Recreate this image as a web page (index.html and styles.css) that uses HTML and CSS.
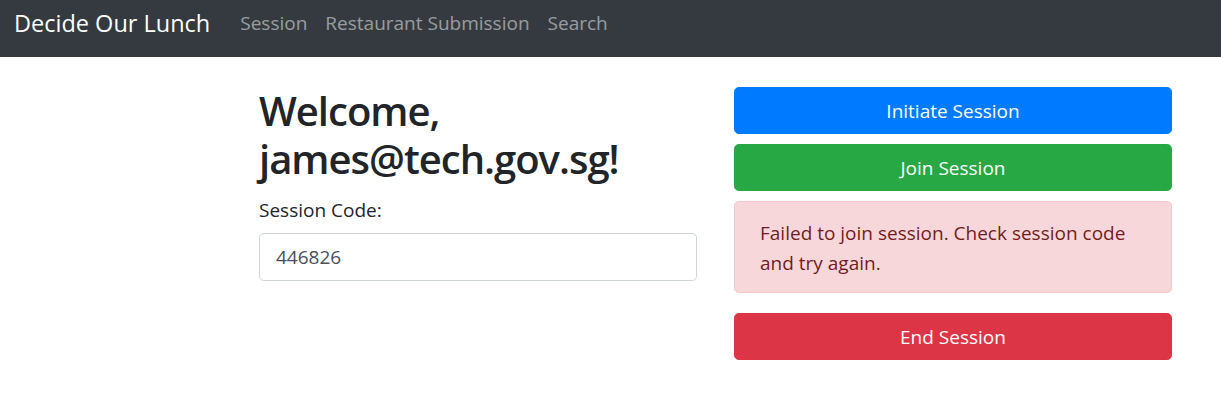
FILE: index.html
```html
<!DOCTYPE html>
<html lang="en">
<head>
<meta charset="utf-8">
<title>Decide Our Lunch</title>
<link rel="stylesheet" href="styles.css">
</head>
<body>
<nav class="navbar">
  <a class="brand" href="#">Decide Our Lunch</a>
  <ul class="nav">
    <li><a class="nav-link" href="#">Session</a></li>
    <li><a class="nav-link" href="#">Restaurant Submission</a></li>
    <li><a class="nav-link" href="#">Search</a></li>
  </ul>
</nav>
<main class="main">
  <section class="col">
    <h1 class="title">Welcome, james@tech.gov.sg!</h1>
    <label class="label" for="code">Session Code:</label>
    <input class="input" id="code" type="text" value="446826">
  </section>
  <section class="col">
    <button class="btn btn-primary">Initiate Session</button>
    <button class="btn btn-success">Join Session</button>
    <div class="alert">Failed to join session. Check session code and try again.</div>
    <button class="btn btn-danger">End Session</button>
  </section>
</main>
</body>
</html>
```
FILE: styles.css
```css
* { box-sizing: border-box; }
body {
  margin: 0;
  font-family: "Open Sans", "Noto Sans", sans-serif;
  color: #212529;
  background: #fff;
  font-size: 19px;
  line-height: 1.5;
}
.navbar {
  display: flex;
  align-items: center;
  height: 57px;
  padding: 0 14px 11px 14px;
  background: #343a40;
}
.brand {
  font-size: 23.5px;
  line-height: 34px;
  color: #fff;
  text-decoration: none;
  margin-right: 21px;
  white-space: nowrap;
}
.nav {
  display: flex;
  list-style: none;
  margin: 0;
  padding: 0;
}
.nav-link {
  display: block;
  padding: 0 9px;
  line-height: 34px;
  color: rgba(255,255,255,.5);
  text-decoration: none;
  font-size: 19px;
}
.main {
  display: flex;
  gap: 37px;
  padding: 30px 0 0 259px;
}
.col {
  width: 438px;
  display: flex;
  flex-direction: column;
}
.title {
  margin: 0 0 13px;
  font-size: 40px;
  font-weight: 600;
  line-height: 48px;
  letter-spacing: -1px;
}
.label {
  display: block;
  font-size: 19px;
  line-height: 28px;
  margin-bottom: 9px;
}
.input {
  height: 48px;
  padding: 8px 16px;
  font-size: 19px;
  font-family: inherit;
  color: #495057;
  border: 1px solid #ced4da;
  border-radius: 4.8px;
}
.btn {
  display: block;
  width: 100%;
  height: 47px;
  margin-bottom: 10px;
  padding: 2px 16px 0;
  font-family: inherit;
  font-size: 19px;
  line-height: 43px;
  color: #fff;
  border: 1px solid transparent;
  border-radius: 4.8px;
}
.btn-primary { background: #007bff; border-color: #007bff; }
.btn-success { background: #28a745; border-color: #28a745; }
.btn-danger { background: #dc3545; border-color: #dc3545; }
.alert {
  margin-bottom: 20px;
  padding: 16px 25px 14px;
  font-size: 19px;
  line-height: 30px;
  color: #721c24;
  background: #f8d7da;
  border: 1px solid #f5c6cb;
  border-radius: 4.8px;
}
```
